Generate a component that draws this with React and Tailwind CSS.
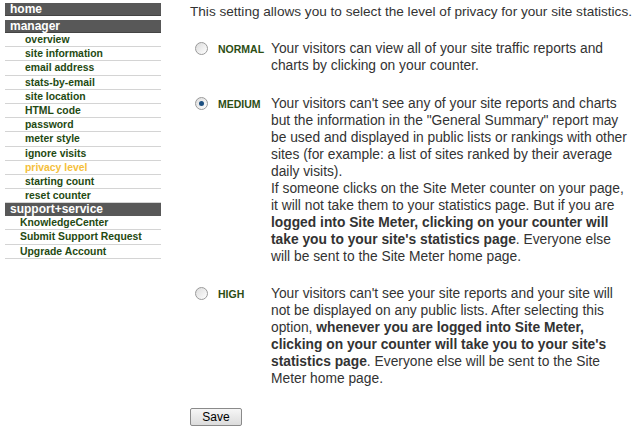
import React from "react";

const managerItems = [
  "overview",
  "site information",
  "email address",
  "stats-by-email",
  "site location",
  "HTML code",
  "password",
  "meter style",
  "ignore visits",
  "privacy level",
  "starting count",
  "reset counter",
];
const supportItems = ["KnowledgeCenter", "Submit Support Request", "Upgrade Account"];

function Radio({ checked }) {
  return (
    <span className="relative inline-block w-[13px] h-[13px] rounded-full border border-[#9a9a9a] bg-gradient-to-br from-[#dcdcdc] to-[#ffffff]">
      {checked && (
        <span className="absolute left-[3px] top-[3px] w-[5px] h-[5px] rounded-full bg-[#1c4f80]" />
      )}
    </span>
  );
}

function Option({ label, checked, children }) {
  return (
    <div className="flex items-start">
      <div className="w-[28px] pl-[5px] pt-[2px] flex">
        <Radio checked={checked} />
      </div>
      <div className="w-[53px] text-[10.5px] font-bold text-[#2d4d14] pt-[2px] leading-[15px]">{label}</div>
      <div className="w-[359px] text-[13.8px] leading-[17px] text-[#333]">{children}</div>
    </div>
  );
}

export default function App() {
  return (
    <div
      className="w-[640px] h-[435px] bg-white flex overflow-hidden"
      style={{ fontFamily: '"Liberation Sans", Arial, sans-serif' }}
    >
      <div className="w-[156px] ml-[5px] mt-[3px] flex flex-col shrink-0">
        <div className="h-[13px] bg-[#585858] text-white font-bold text-[12px] leading-[13px] pl-[5px] border-b border-[#444]">home</div>
        <div className="h-[13px] mt-[4px] bg-[#585858] text-white font-bold text-[12px] leading-[13px] pl-[5px] border-b border-[#444]">manager</div>
        {managerItems.map((t) => (
          <div
            key={t}
            className={`h-[14.2px] border-b border-[#d4d4d4] text-[10.4px] font-bold leading-[14px] pl-[20px] ${t === "privacy level" ? "text-[#f5c03c]" : "text-[#1f4a12]"}`}
          >
            {t}
          </div>
        ))}
        <div className="h-[13px] bg-[#585858] text-white font-bold text-[12px] leading-[13px] pl-[5px]">support+service</div>
        {supportItems.map((t) => (
          <div key={t} className="h-[14.2px] border-b border-[#d4d4d4] text-[10.4px] font-bold leading-[14px] pl-[15px] text-[#1f4a12]">
            {t}
          </div>
        ))}
      </div>
      <div className="ml-[29px] flex flex-col">
        <p className="text-[13.6px] leading-[16px] text-[#333] mt-[4px]">
          This setting allows you to select the level of privacy for your site statistics.
        </p>
        <div className="mt-[20px] flex flex-col">
          <Option label="NORMAL">
            Your visitors can view all of your site traffic reports and charts by clicking on your counter.
          </Option>
          <div className="h-[21px]" />
          <Option label="MEDIUM" checked>
            Your visitors can't see any of your site reports and charts but the information in the "General Summary" report may be used and displayed in public lists or rankings with other sites (for example: a list of sites ranked by their average daily visits).
            <br />
            If someone clicks on the Site Meter counter on your page, it will not take them to your statistics page. But if you are <b>logged into Site Meter, clicking on your counter will take you to your site's statistics page</b>. Everyone else will be sent to the Site Meter home page.
          </Option>
          <div className="h-[20px]" />
          <Option label="HIGH">
            Your visitors can't see your site reports and your site will not be displayed on any public lists. After selecting this option, <b>whenever you are logged into Site Meter, clicking on your counter will take you to your site's statistics page</b>. Everyone else will be sent to the Site Meter home page.
          </Option>
        </div>
        <div className="mt-[17px]">
          <button className="w-[52px] h-[18px] border border-[#8a8a8a] rounded-[2px] bg-gradient-to-b from-[#f6f6f6] to-[#dcdcdc] text-[12px] leading-[16px] text-black">
            Save
          </button>
        </div>
      </div>
    </div>
  );
}
